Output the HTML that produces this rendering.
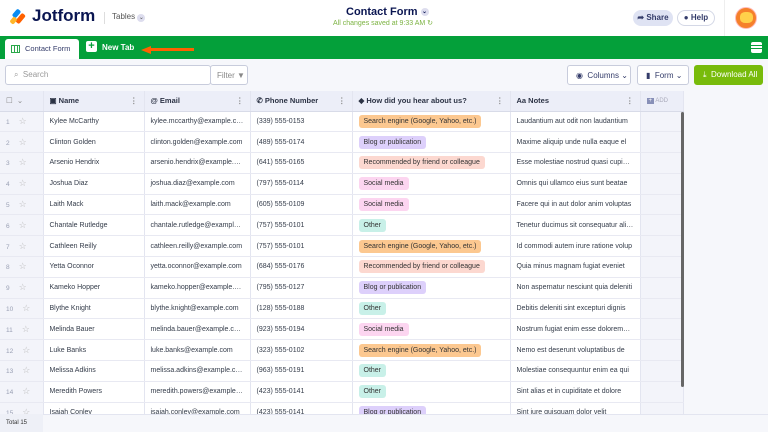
<!DOCTYPE html><html><head><style>
*{box-sizing:border-box;margin:0;padding:0}
body{width:768px;height:432px;overflow:hidden;font-family:"Liberation Sans",sans-serif;background:#f6f7fb;position:relative;color:#2c3345}
.a{position:absolute}
.hdr{left:0;top:0;width:768px;height:36px;background:#fff}
.green{left:0;top:36px;width:768px;height:23px;background:#04a03a}
.tool{left:0;top:59px;width:768px;height:32px;background:#f6f7fb}
.btn{position:absolute;border:1px solid #c8ccdc;background:#fff;border-radius:3px;font-size:8px;display:flex;align-items:center;color:#343c6a}
table{position:absolute;left:0;top:91px;width:683px;border-collapse:collapse;table-layout:fixed;font-size:7px}
td,th{border-right:1px solid #e3e5f0;border-bottom:1px solid #e8e9f2;white-space:nowrap;overflow:hidden;text-overflow:ellipsis;padding:0 6px;text-align:left}
th{height:20px;background:#eceef8;font-weight:bold;font-size:7.5px;color:#2c3345;border-bottom:1px solid #d8dbe8}
td{height:20.8px;background:#fff;color:#343c4a}
td.n{background:#f3f4fa;color:#9aa0b4;font-size:6.5px}
.tag{display:inline-block;padding:3px 5px;border-radius:3px;font-size:7px;color:#333}
.o{background:#fcc890}.p{background:#ddd0fb}.r{background:#fcd8d0}.s{background:#fcd5f0}.g{background:#c8f0e8}
.star{color:#bbb;margin-left:9px;font-size:9px}
.dots{float:right;color:#888}
</style></head><body>
<div class="a hdr">
<div class="a" style="left:9px;top:9px;width:16px;height:17px">
<div class="a" style="left:5px;top:0;width:5px;height:9px;background:#0a8cf2;transform:rotate(40deg);border-radius:2px"></div>
<div class="a" style="left:9px;top:4px;width:5px;height:11px;background:#ff6100;transform:rotate(40deg);border-radius:2px"></div>
<div class="a" style="left:2px;top:8px;width:5px;height:7px;background:#ffb629;transform:rotate(40deg);border-radius:2px"></div>
</div>
<div class="a" style="left:32px;top:6px;font-size:17px;font-weight:bold;color:#0a1551">Jotform</div>
<div class="a" style="left:104px;top:12px;width:1px;height:12px;background:#ddd"></div>
<div class="a" style="left:112px;top:12px;font-size:8px;color:#555">Tables <span style="display:inline-block;width:8px;height:8px;border-radius:50%;background:#dde;font-size:6px;text-align:center">⌄</span></div>
<div class="a" style="left:346px;top:6px;font-size:11px;font-weight:bold;color:#0a1551">Contact Form <span style="display:inline-block;width:8px;height:8px;border-radius:50%;background:#dde;font-size:6px;text-align:center;vertical-align:middle">⌄</span></div>
<div class="a" style="left:333px;top:19px;font-size:7px;color:#7cb342">All changes saved at 9:33 AM ↻</div>
<div class="a" style="left:633px;top:10px;width:40px;height:16px;border-radius:8px;background:#dfe3f3;font-size:8px;font-weight:bold;color:#343c6a;text-align:center;line-height:16px">➦ Share</div>
<div class="a" style="left:677px;top:10px;width:38px;height:16px;border-radius:8px;border:1px solid #d4d8e6;font-size:8px;font-weight:bold;color:#343c6a;text-align:center;line-height:14px">● Help</div>
<div class="a" style="left:724px;top:0;width:1px;height:36px;background:#eee"></div>
<div class="a" style="left:735px;top:7px;width:22px;height:22px;border-radius:50%;background:#f5802a;border:1px solid #fbb"><div class="a" style="left:4px;top:4px;width:13px;height:11px;background:#ffd04a;border-radius:40%"></div></div>
</div>
<div class="a green">
<div class="a" style="left:5px;top:3px;width:74px;height:20px;background:#fff;border-radius:3px 3px 0 0;font-size:7.5px;line-height:20px;padding-left:20px;color:#343c6a">Contact Form <span style="color:#bbb">⋮</span>
<div class="a" style="left:6px;top:6px;width:9px;height:8px;border:1px solid #2aa84a;background:repeating-linear-gradient(90deg,transparent 0 2px,#2aa84a 2px 3px)"></div></div>
<div class="a" style="left:86px;top:5px;width:11px;height:11px;background:#fff;border-radius:2px;color:#04a03a;font-size:11px;line-height:10px;text-align:center;font-weight:bold">+</div>
<div class="a" style="left:102px;top:7px;font-size:8px;font-weight:bold;color:#fff">New Tab</div>
<div class="a" style="left:141px;top:10px;width:0;height:0;border-top:4px solid transparent;border-bottom:4px solid transparent;border-right:10px solid #ff6100"></div>
<div class="a" style="left:150px;top:12px;width:44px;height:3px;background:#ff6100"></div>
<div class="a" style="left:751px;top:6px;width:11px;height:11px;background:#fff;border-radius:2px;background:linear-gradient(#fff 0 3px,#04a03a 3px 4px,#fff 4px 6px,#04a03a 6px 7px,#fff 7px)"></div>
</div>
<div class="a tool">
<div class="btn" style="left:5px;top:6px;width:206px;height:20px;padding-left:8px;color:#999">⌕&nbsp; Search</div>
<div class="btn" style="left:210px;top:6px;width:38px;height:20px;padding-left:6px;color:#888">Filter ▼</div>
<div class="btn" style="left:567px;top:6px;width:64px;height:20px;padding-left:8px">◉&nbsp; Columns ⌄</div>
<div class="btn" style="left:637px;top:6px;width:52px;height:20px;padding-left:8px">▮&nbsp; Form ⌄</div>
<div class="btn" style="left:694px;top:6px;width:69px;height:20px;padding-left:8px;background:#78bb0b;border-color:#78bb0b;color:#fff">⤓&nbsp; Download All</div>
</div>
<table>
<colgroup><col style="width:43px"><col style="width:101px"><col style="width:106px"><col style="width:102px"><col style="width:158px"><col style="width:130px"><col style="width:43px"></colgroup>
<tr><th style="font-weight:normal;color:#888">☐ &nbsp;⌄</th><th>▣ Name<span class="dots">⋮</span></th><th>@ Email<span class="dots">⋮</span></th><th>✆ Phone Number<span class="dots">⋮</span></th><th>◆ How did you hear about us?<span class="dots">⋮</span></th><th>Aa Notes<span class="dots">⋮</span></th><th style="color:#aab;font-weight:normal;font-size:6px"><span style="background:#8890b8;color:#fff;padding:0 2px">+</span> ADD</th></tr>
<tr><td class="n">1<span class="star">☆</span></td><td>Kylee McCarthy</td><td>kylee.mccarthy@example.com</td><td>(339) 555-0153</td><td><span class="tag o">Search engine (Google, Yahoo, etc.)</span></td><td>Laudantium aut odit non laudantium</td><td class="n"></td></tr>
<tr><td class="n">2<span class="star">☆</span></td><td>Clinton Golden</td><td>clinton.golden@example.com</td><td>(489) 555-0174</td><td><span class="tag p">Blog or publication</span></td><td>Maxime aliquip unde nulla eaque el</td><td class="n"></td></tr>
<tr><td class="n">3<span class="star">☆</span></td><td>Arsenio Hendrix</td><td>arsenio.hendrix@example.com</td><td>(641) 555-0165</td><td><span class="tag r">Recommended by friend or colleague</span></td><td>Esse molestiae nostrud quasi cupiditate</td><td class="n"></td></tr>
<tr><td class="n">4<span class="star">☆</span></td><td>Joshua Diaz</td><td>joshua.diaz@example.com</td><td>(797) 555-0114</td><td><span class="tag s">Social media</span></td><td>Omnis qui ullamco eius sunt beatae</td><td class="n"></td></tr>
<tr><td class="n">5<span class="star">☆</span></td><td>Laith Mack</td><td>laith.mack@example.com</td><td>(605) 555-0109</td><td><span class="tag s">Social media</span></td><td>Facere qui in aut dolor anim voluptas</td><td class="n"></td></tr>
<tr><td class="n">6<span class="star">☆</span></td><td>Chantale Rutledge</td><td>chantale.rutledge@example.com</td><td>(757) 555-0101</td><td><span class="tag g">Other</span></td><td>Tenetur ducimus sit consequatur aliquip</td><td class="n"></td></tr>
<tr><td class="n">7<span class="star">☆</span></td><td>Cathleen Reilly</td><td>cathleen.reilly@example.com</td><td>(757) 555-0101</td><td><span class="tag o">Search engine (Google, Yahoo, etc.)</span></td><td>Id commodi autem irure ratione volup</td><td class="n"></td></tr>
<tr><td class="n">8<span class="star">☆</span></td><td>Yetta Oconnor</td><td>yetta.oconnor@example.com</td><td>(684) 555-0176</td><td><span class="tag r">Recommended by friend or colleague</span></td><td>Quia minus magnam fugiat eveniet</td><td class="n"></td></tr>
<tr><td class="n">9<span class="star">☆</span></td><td>Kameko Hopper</td><td>kameko.hopper@example.com</td><td>(795) 555-0127</td><td><span class="tag p">Blog or publication</span></td><td>Non aspernatur nesciunt quia deleniti</td><td class="n"></td></tr>
<tr><td class="n">10<span class="star">☆</span></td><td>Blythe Knight</td><td>blythe.knight@example.com</td><td>(128) 555-0188</td><td><span class="tag g">Other</span></td><td>Debitis deleniti sint excepturi dignis</td><td class="n"></td></tr>
<tr><td class="n">11<span class="star">☆</span></td><td>Melinda Bauer</td><td>melinda.bauer@example.com</td><td>(923) 555-0194</td><td><span class="tag s">Social media</span></td><td>Nostrum fugiat enim esse doloremque</td><td class="n"></td></tr>
<tr><td class="n">12<span class="star">☆</span></td><td>Luke Banks</td><td>luke.banks@example.com</td><td>(323) 555-0102</td><td><span class="tag o">Search engine (Google, Yahoo, etc.)</span></td><td>Nemo est deserunt voluptatibus de</td><td class="n"></td></tr>
<tr><td class="n">13<span class="star">☆</span></td><td>Melissa Adkins</td><td>melissa.adkins@example.com</td><td>(963) 555-0191</td><td><span class="tag g">Other</span></td><td>Molestiae consequuntur enim ea qui</td><td class="n"></td></tr>
<tr><td class="n">14<span class="star">☆</span></td><td>Meredith Powers</td><td>meredith.powers@example.com</td><td>(423) 555-0141</td><td><span class="tag g">Other</span></td><td>Sint alias et in cupiditate et dolore</td><td class="n"></td></tr>
<tr><td class="n">15<span class="star">☆</span></td><td>Isaiah Conley</td><td>isaiah.conley@example.com</td><td>(423) 555-0141</td><td><span class="tag p">Blog or publication</span></td><td>Sint iure quisquam dolor velit</td><td class="n"></td></tr>
</table>
<div class="a" style="left:681px;top:112px;width:3px;height:275px;background:#666;border-radius:2px"></div>
<div class="a" style="left:0;top:414px;width:768px;height:18px;background:#f6f7fb;border-top:1px solid #e3e5f0"></div>
<div class="a" style="left:0;top:414px;width:43px;height:18px;background:#eef0f7;font-size:6px;line-height:18px;padding-left:6px;color:#333">Total 15</div>
</body></html>
